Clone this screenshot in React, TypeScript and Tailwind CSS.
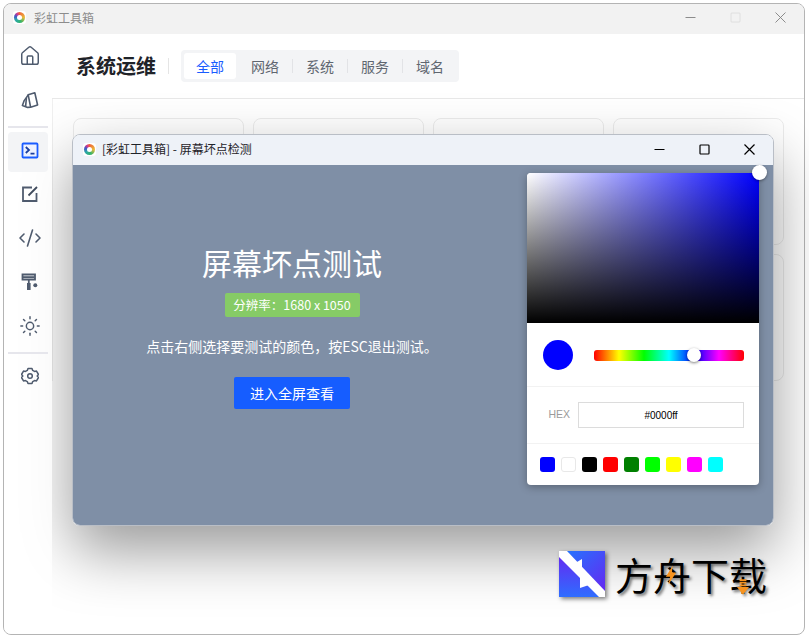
import { CodeXml, House, Sun } from "lucide-react";

const tabs = ["网络", "系统", "服务", "域名"];
const swatches = [
  "bg-[#0000ff]",
  "bg-white border border-[#e8e8e8]",
  "bg-black",
  "bg-[#ff0000]",
  "bg-[#008000]",
  "bg-[#00ff00]",
  "bg-[#ffff00]",
  "bg-[#ff00ff]",
  "bg-[#00ffff]",
];

function AppLogo() {
  return (
    <div className="flex h-[13px] w-[13px] items-center justify-center rounded-[3px] bg-white">
      <div className="flex h-[11px] w-[11px] items-center justify-center rounded-full bg-[conic-gradient(#f0653a,#e9b93a_25%,#35b56a_45%,#2aa7a8_65%,#4456c8_80%,#d8388a_92%,#f0653a)]">
        <div className="h-[5px] w-[5px] rounded-full bg-white" />
      </div>
    </div>
  );
}

function SwatchIcon() {
  return (
    <svg width="18" height="18" viewBox="0 0 18 18" fill="none" stroke="#4f5b6e" strokeWidth="1.6" strokeLinejoin="round">
      <path d="M7.200 3.800 13.800 1.800 16.600 14 9.600 16.200Z" />
      <path d="M7.200 4 3.200 9.600 1.400 14.600 6.600 16.400 9.600 16.200" />
      <path d="M5.400 7 4.600 15.600" />
    </svg>
  );
}

function TerminalIcon() {
  return (
    <svg width="18" height="17" viewBox="0 0 18 17" fill="none" strokeWidth="1.800">
      <rect x="1.500" y="1.500" width="15" height="14" rx="0.800" fill="#eef2ff" stroke="#1a5cff" />
      <path d="M4.800 5 8 8 4.800 11" stroke="#1c3f9e" />
      <path d="M9.500 11.600H13.500" stroke="#1c3f9e" />
    </svg>
  );
}

function EditIcon() {
  return (
    <svg width="18" height="18" viewBox="0 0 18 18" fill="none" stroke="#4f5b6e" strokeWidth="1.800">
      <path d="M11 2.500H2v13.500h13.500V8" />
      <path d="M7.500 10.500 16 2" stroke="#3f4a5c" />
    </svg>
  );
}

function RollerIcon() {
  return (
    <svg width="18" height="18" viewBox="0 0 18 18" fill="none">
      <path d="M1.500 1.500h12.500v5H1.500Z" stroke="#4f5b6e" strokeWidth="1.800" />
      <path d="M2 3.200h11.500v1.800H2Z" fill="#4f5b6e" />
      <path d="M7.800 6.500v3.500" stroke="#4f5b6e" strokeWidth="1.800" />
      <rect x="6" y="10" width="3.600" height="7" fill="#4f5b6e" />
      <circle cx="14.300" cy="12.300" r="2" fill="#4f5b6e" />
    </svg>
  );
}

function GearIcon() {
  return (
    <svg width="18" height="18" viewBox="0 0 18 18" fill="none" stroke="#4f5b6e" strokeWidth="1.500" strokeLinejoin="round">
      <path d="M7 1.500h4l.7 1.900 1.800 1 2-.3 2 3.400L16.200 9l1.300 1.500-2 3.400-2-.3-1.800 1-.7 1.900H7l-.7-1.900-1.800-1-2 .3-2-3.400L1.800 9 .5 7.500l2-3.400 2 .3 1.800-1Z" />
      <circle cx="9" cy="9" r="2.300" />
    </svg>
  );
}

function WindowButtons({ color, faint }: { color: string; faint?: boolean }) {
  const sw = faint ? 0.9 : 1.2;
  return (
    <div className="ml-auto flex items-center pr-px">
      <div className="flex h-6 w-[45px] items-center justify-center">
        <svg width="11" height="11" viewBox="0 0 11 11"><path d="M.5 5.500h10" stroke={color} strokeWidth={sw} /></svg>
      </div>
      <div className="flex h-6 w-[45px] items-center justify-center">
        <svg width="11" height="11" viewBox="0 0 11 11" fill="none"><rect x="1" y="1" width="9" height="9" rx="0.800" stroke={faint ? "#dcdcdc" : color} strokeWidth={sw} /></svg>
      </div>
      <div className="flex h-6 w-[45px] items-center justify-center">
        <svg width="11" height="11" viewBox="0 0 11 11" fill="none"><path d="M.5.500l10 10M10.500.500l-10 10" stroke={color} strokeWidth={sw} /></svg>
      </div>
    </div>
  );
}

function NavItem({ children }: { children: React.ReactNode }) {
  return <div className="flex h-11 w-10 items-center justify-center pl-1">{children}</div>;
}

function ColorPicker() {
  return (
    <div className="relative w-[232px] self-start rounded-[4px] bg-white shadow-[0_2px_8px_rgba(0,0,0,0.3)]">
      <div className="h-[150px] rounded-t-[4px] bg-[linear-gradient(to_top,#000,transparent),linear-gradient(to_right,#fff,#0000ff)]" />
      <div className="absolute -right-2 -top-2 h-[15px] w-[15px] rounded-full bg-white shadow-[0_1px_3px_rgba(0,0,0,0.4)]" />

      <div className="flex h-[64px] items-center gap-[21px] border-b border-[#f2f2f2] pl-4 pr-[15px]">
        <div className="h-[30px] w-[30px] rounded-full bg-[#0000ff]" />
        <div className="relative mt-px h-[11px] w-[150px] rounded-[3px] bg-[linear-gradient(to_right,#f00,#ff0,#0f0,#0ff,#00f,#f0f,#f00)]">
          <div className="absolute left-[93px] top-[-2px] h-[14px] w-[14px] rounded-full bg-white shadow-[0_1px_3px_rgba(0,0,0,0.5)]" />
        </div>
      </div>

      <div className="flex h-[57px] items-center justify-end gap-2 border-b border-[#f2f2f2] pr-[15px] font-['Liberation_Sans',sans-serif]">
        <span className="text-[10.500px] text-[#9a9a9a]">HEX</span>
        <div className="flex h-[26px] w-[166px] items-center justify-center border border-[#dcdcdc] text-[10px] text-black">#0000ff</div>
      </div>

      <div className="flex h-[41px] items-center gap-[6px] pl-[13px]">
        {swatches.map((c, i) => (
          <div key={i} className={`h-[15px] w-[15px] rounded-[3px] ${c}`} />
        ))}
      </div>
    </div>
  );
}

export default function App() {
  return (
    <div className="relative h-[639px] w-[809px] overflow-hidden bg-white pl-[3px] pt-[3px] font-['Noto_Sans_CJK_SC',sans-serif]">
      {/* main window */}
      <div className="flex h-[632px] w-[802px] flex-col overflow-hidden rounded-lg border border-[#b4b4b4] bg-white">
        <div className="flex h-[30px] shrink-0 items-center bg-[#f2f2f2] pb-[3px] pl-[9px]">
          <AppLogo />
          <span className="ml-2 text-xs text-[#8c8c8c]">彩虹工具箱</span>
          <WindowButtons color="#808080" faint />
        </div>

        <div className="flex min-h-0 flex-1">
          {/* sidebar sits above the dialog's shadow */}
          <div className="relative z-20 flex w-[48px] shrink-0 flex-col items-center bg-white/80">
            <NavItem><House size={22} strokeWidth={1.6} color="#4f5b6e" /></NavItem>
            <NavItem><SwatchIcon /></NavItem>
            <div className="mt-[4px] h-[2px] w-10 bg-[#e6e6ec]" />
            <div className="mt-[4px] flex h-10 w-10 items-center justify-center rounded-[4px] bg-[#f3f4f6] pb-1 pl-1">
              <TerminalIcon />
            </div>
            <NavItem><EditIcon /></NavItem>
            <NavItem><CodeXml size={24} strokeWidth={1.6} color="#4f5b6e" /></NavItem>
            <NavItem><RollerIcon /></NavItem>
            <NavItem><Sun size={22} strokeWidth={1.6} color="#4f5b6e" /></NavItem>
            <div className="mt-[4px] h-[2px] w-10 bg-[#e6e6ec]" />
            <NavItem><GearIcon /></NavItem>
          </div>

          <div className="flex min-w-0 flex-1 flex-col">
            {/* header */}
            <div className="flex h-[65px] shrink-0 items-center border-b border-[#e8e8e8] pl-6">
              <h1 className="text-[20px] font-bold text-[#1f2329]">系统运维</h1>
              <div className="ml-3 h-4 w-px bg-[#e5e5e5]" />
              <div className="ml-3 flex h-8 items-center rounded-[4px] bg-[#f3f4f6] pl-[3px] pr-[2px]">
                <div className="flex h-[26px] w-[52px] items-center justify-center rounded-[3px] bg-white text-sm text-[#1a5cff]">全部</div>
                {tabs.map((t, i) => (
                  <div key={t} className="flex items-center">
                    {i > 0 && <div className="h-[14px] w-px bg-[#e2e3e6]" />}
                    <div className={`flex h-[26px] items-center justify-center text-sm text-[#5f6670] ${i > 0 ? "w-[54px]" : "w-[56px] pl-[2px]"}`}>{t}</div>
                  </div>
                ))}
              </div>
            </div>

            {/* cards behind the dialog */}
            <div className="flex flex-wrap content-start gap-[9px] border-l border-[#f0f0f0] pl-5 pt-[19px]">
              {Array.from({ length: 8 }).map((_, i) => (
                <div key={i} className="h-[127px] w-[171px] rounded-lg border border-[#ececec]" />
              ))}
            </div>
          </div>
        </div>
      </div>

      {/* dialog */}
      <div className="absolute left-[72px] top-[134px] z-10 flex h-[392px] w-[702px] flex-col overflow-hidden rounded-lg border border-[#b9bec6] shadow-[0_25px_60px_rgba(0,0,0,0.4)]">
        <div className="flex h-[30px] shrink-0 items-center bg-[#eef2f8] pb-[2px] pl-[10px]">
          <AppLogo />
          <span className="ml-[6px] text-xs text-[#1f2329]">[彩虹工具箱] - 屏幕坏点检测</span>
          <WindowButtons color="#000000" />
        </div>
        <div className="flex flex-1 bg-[#7f8fa6] pt-2">
          <div className="flex w-[438px] flex-col items-center pt-[67px] text-white">
            <div className="text-[30px] font-normal leading-[44px]">屏幕坏点测试</div>
            <div className="mt-[9px] flex h-6 w-[135px] items-center justify-center rounded-[2px] bg-[#86cb66] text-[12.500px]">分辨率：1680 x 1050</div>
            <p className="mt-[19px] text-sm leading-5">点击右侧选择要测试的颜色，按ESC退出测试。</p>
            <button className="mt-[21px] h-8 w-[116px] rounded-[2px] bg-[#165dff] text-sm text-white">进入全屏查看</button>
          </div>
          <div className="ml-4">
            <ColorPicker />
          </div>
        </div>
      </div>

      {/* watermark */}
      <div className="absolute left-[559px] top-[551px] z-10 flex items-center">
        <svg width="46" height="46" viewBox="0 0 46 46" className="drop-shadow-[2px_2px_2px_rgba(0,0,0,0.5)]">
          <defs>
            <linearGradient id="wmUpper" x1="0" y1="0" x2="1" y2="1">
              <stop offset="0" stopColor="#1f7bff" />
              <stop offset="1" stopColor="#6a22f0" />
            </linearGradient>
            <linearGradient id="wmLower" x1="0" y1="0" x2="0" y2="1">
              <stop offset="0" stopColor="#6a22f0" />
              <stop offset="1" stopColor="#2f6dff" />
            </linearGradient>
          </defs>
          <path d="M0 0H46V46Z" fill="url(#wmUpper)" />
          <path d="M0 0V46H46Z" fill="url(#wmLower)" />
          <path d="M0 0H8L46 40V46H40L0 6Z" fill="#ffffff" />
          <path d="M23 8V24L13 14Z" fill="#ffffff" />
          <path d="M21 22V37L33 33Z" fill="#ffffff" />
        </svg>
        <div className="relative ml-[10px] text-[38px] font-normal leading-[46px] text-black [text-shadow:2px_2px_3px_rgba(0,0,0,0.55)]">
          方舟下载
          <svg width="12" height="20" viewBox="0 0 14 22" className="absolute left-[50px] top-[14px]">
            <path d="M9 0 1 13h5L4 22 13 8H8Z" fill="#f7931e" />
          </svg>
          <svg width="12" height="18" viewBox="0 0 14 18" className="absolute left-[122px] top-[27px]">
            <path d="M3 0h8v2H3ZM3 3h8v2H3ZM3 6h8v2H3ZM0 9h14l-7 9Z" fill="#f7931e" />
          </svg>
        </div>
      </div>
    </div>
  );
}
